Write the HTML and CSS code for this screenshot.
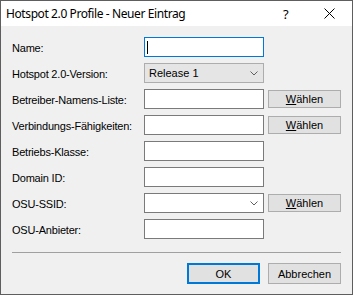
FILE: index.html
```html
<!DOCTYPE html>
<html lang="de">
  <head>
    <meta charset="UTF-8" />
    <meta name="viewport" content="width=device-width, initial-scale=1.0" />
    <title>Hotspot 2.0 Profile - Neuer Eintrag</title>
    <link rel="stylesheet" href="styles.css">
  </head>
  <body>
    <div class="fenster">
      <header class="titelleiste">
        <span class="titel">Hotspot 2.0 Profile - Neuer Eintrag</span>
        <span class="hilfe">?</span>
        <span class="schliessen">
          <svg width="11" height="11" viewBox="0 0 11 11">
            <path d="M0.5 0.5 L10.5 10.5 M10.5 0.5 L0.5 10.5" stroke="#000" stroke-width="1" fill="none" />
          </svg>
        </span>
      </header>

      <main class="inhalt">
        <form class="formular">
          <label>Name:</label>
          <div class="feld fokus"><span class="cursor"></span></div>
          <span></span>

          <label>Hotspot 2.0-Version:</label>
          <div class="auswahl grau">
            <span>Release 1</span>
            <svg class="pfeil" width="8" height="5" viewBox="0 0 8 5">
              <path d="M0.5 0.5 L4 4 L7.5 0.5" stroke="#606060" fill="none" />
            </svg>
          </div>
          <span></span>

          <label>Betreiber-Namens-Liste:</label>
          <div class="feld"></div>
          <button type="button" class="knap"><u>W</u>ählen</button>

          <label>Verbindungs-Fähigkeiten:</label>
          <div class="feld"></div>
          <button type="button" class="knap"><u>W</u>ählen</button>

          <label>Betriebs-Klasse:</label>
          <div class="feld"></div>
          <span></span>

          <label>Domain ID:</label>
          <div class="feld"></div>
          <span></span>

          <label>OSU-SSID:</label>
          <div class="auswahl">
            <span></span>
            <svg class="pfeil" width="8" height="5" viewBox="0 0 8 5">
              <path d="M0.5 0.5 L4 4 L7.5 0.5" stroke="#606060" fill="none" />
            </svg>
          </div>
          <button type="button" class="knap"><u>W</u>ählen</button>

          <label>OSU-Anbieter:</label>
          <div class="feld"></div>
          <span></span>
        </form>

        <hr class="linie" />

        <nav class="knapper">
          <button type="button" class="knap stor standard">OK</button>
          <button type="button" class="knap stor">Abbrechen</button>
        </nav>
      </main>
    </div>
  </body>
</html>
```

FILE: styles.css
```css
* {
  margin: 0px;
  box-sizing: border-box;
}

body {
  background-color: #f0f0f0;
  font-family: "Liberation Sans", Arial, sans-serif;
  font-size: 11px;
  color: #000;
}

.fenster {
  width: 353px;
  height: 295px;
  border: 1px solid #5e5e5e;
  background-color: #f0f0f0;
  overflow: hidden;
}

.titelleiste {
  height: 25px;
  background-color: white;
  display: flex;
  align-items: center;
  padding-left: 5px;
}

.titel {
  font-family: "Noto Sans", sans-serif;
  font-size: 12px;
  letter-spacing: -0.4px;
  flex: 1;
  padding-bottom: 1px;
}

.hilfe {
  font-family: "Noto Sans", sans-serif;
  font-size: 13px;
  width: 41px;
}

.schliessen {
  display: flex;
  width: 11px;
  margin-right: 17px;
  padding-bottom: 1px;
}

.inhalt {
  padding: 11px 11px 0px 11px;
}

.formular {
  display: grid;
  grid-template-columns: 128px 120px 73px;
  grid-auto-rows: 20px;
  column-gap: 4px;
  row-gap: 6px;
  align-items: center;
}

.formular label {
  padding-top: 1px;
  letter-spacing: -0.2px;
}

.feld,
.auswahl {
  height: 20px;
  background-color: white;
  border: 1px solid #7a7a7a;
}

.fokus {
  border-color: #0078d7;
  display: flex;
  align-items: center;
  padding-left: 2px;
}

.cursor {
  width: 1px;
  height: 13px;
  background-color: #000;
}

.auswahl {
  display: flex;
  align-items: center;
  justify-content: space-between;
  padding: 0px 5px 0px 4px;
}

.grau {
  background-color: #e5e5e5;
  border-color: #adadad;
}

.pfeil {
  margin-top: 1px;
}

.knap {
  height: 18px;
  background-color: #e1e1e1;
  border: 1px solid #adadad;
  border-radius: 0px;
  font-family: "Liberation Sans", Arial, sans-serif;
  font-size: 11px;
  color: #000;
  padding: 0px;
  text-align: center;
}

.linie {
  border: none;
  height: 1px;
  background-color: #a0a0a0;
  margin-top: 13px;
}

.knapper {
  display: flex;
  justify-content: flex-end;
  gap: 8px;
  margin-top: 10px;
}

.stor {
  width: 73px;
  height: 21px;
}

.standard {
  border: 2px solid #0078d7;
}
```
